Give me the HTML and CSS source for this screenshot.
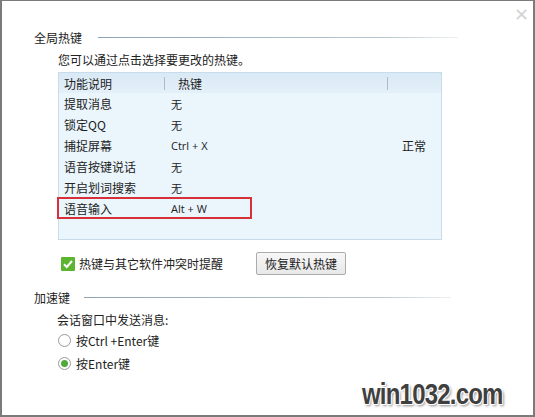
FILE: index.html
```html
<!DOCTYPE html>
<html lang="zh-CN">
<head>
    <meta charset="UTF-8">
    <title>热键设置</title>
    <link rel="stylesheet" href="styles.css">
</head>
<body>
    <div class="window">
        <div class="close">&#x2715;</div>

        <div class="group-title">
            <span>全局热键</span>
            <div class="rule"></div>
        </div>
        <div class="group-body">
            <p class="hint">您可以通过点击选择要更改的热键。</p>
            <div class="table">
                <div class="thead">
                    <div class="c1">功能说明</div>
                    <div class="c2">热键</div>
                    <div class="c3"></div>
                </div>
                <div class="row"><div class="c1">提取消息</div><div class="c2">无</div><div class="c3"></div></div>
                <div class="row"><div class="c1">锁定QQ</div><div class="c2">无</div><div class="c3"></div></div>
                <div class="row"><div class="c1">捕捉屏幕</div><div class="c2">Ctrl + X</div><div class="c3">正常</div></div>
                <div class="row"><div class="c1">语音按键说话</div><div class="c2">无</div><div class="c3"></div></div>
                <div class="row"><div class="c1">开启划词搜索</div><div class="c2">无</div><div class="c3"></div></div>
                <div class="row marked"><div class="c1">语音输入</div><div class="c2">Alt + W</div><div class="c3"></div></div>
            </div>
            <div class="actions">
                <label class="check">
                    <span class="box">
                        <svg width="14" height="14" viewBox="0 0 14 14"><rect width="14" height="14" rx="1" fill="#5cb531"/><path d="M3 7.2 L5.8 10 L11 4" fill="none" stroke="#fff" stroke-width="2"/></svg>
                    </span>
                    热键与其它软件冲突时提醒
                </label>
                <button class="btn">恢复默认热键</button>
            </div>
        </div>

        <div class="group-title second">
            <span>加速键</span>
            <div class="rule"></div>
        </div>
        <div class="group-body">
            <p class="hint">会话窗口中发送消息:</p>
            <div class="radio"><span class="dot"></span>按Ctrl +Enter键</div>
            <div class="radio on"><span class="dot"></span>按Enter键</div>
        </div>

        <div class="watermark">win1032.com</div>
    </div>
</body>
</html>
```

FILE: styles.css
```css
body {
    margin: 0;
    font-family: "Noto Sans CJK SC", "Liberation Sans", sans-serif;
    font-size: 12px;
    color: #222;
    background: #fff;
}
.window {
    position: relative;
    width: 531px;
    height: 414px;
    border: 2px solid #7b7b7b;
    border-top-width: 1px;
    background: #fff;
    overflow: hidden;
}
.close {
    position: absolute;
    top: -1px;
    right: 4px;
    font-size: 18px;
    color: #d4d4d4;
}
.group-title {
    display: flex;
    align-items: center;
    margin: 28px 0 0 32px;
    height: 16px;
}
.group-title.second {
    margin-top: 14px;
}
.rule {
    flex: 0 0 360px;
    height: 1px;
    margin-left: 16px;
    background: linear-gradient(to right, #8fa4b3, #b9c7d0 80%, #eef1f3);
}
.second .rule {
    flex-basis: 367px;
    margin-left: 14px;
}
.group-body {
    padding-left: 56px;
}
.hint {
    margin: 7px 0 0;
    line-height: 16px;
}
.second + .group-body .hint {
    margin: 7px 0 0 -1px;
}
.table {
    width: 382px;
    height: 166px;
    margin-top: 4px;
    border: 1px solid #c6dcea;
    background: #eaf5fc;
}
.thead, .row {
    display: flex;
    align-items: center;
}
.thead {
    height: 20px;
    background: linear-gradient(#d9e9f5, #e4f0f9);
}
.c1, .c2, .c3 {
    box-sizing: border-box;
}
.c1 {
    width: 105px;
    padding-left: 5px;
}
.c2 {
    width: 223px;
    padding-left: 7px;
}
.c3 {
    padding-left: 15px;
}
.thead .c2 {
    border-left: 1px solid #a9bccb;
    padding-left: 13px;
    height: 13px;
    line-height: 13px;
}
.thead .c3 {
    border-left: 1px solid #a9bccb;
    height: 13px;
}
.row {
    height: 21px;
}
.row .c2 {
    font-family: "Open Sans", "Noto Sans CJK SC", sans-serif;
    font-size: 11px;
}
.marked {
    position: relative;
}
.marked::after {
    content: "";
    position: absolute;
    left: -2px;
    top: -1px;
    width: 191px;
    height: 18px;
    border: 2px solid #d7303a;
}
.actions {
    display: flex;
    align-items: center;
    margin-top: 12px;
}
.check {
    display: flex;
    align-items: center;
    gap: 4px;
    width: 195px;
    padding-left: 3px;
}
.box {
    display: flex;
}
.btn {
    width: 90px;
    height: 23px;
    padding: 0;
    font-family: inherit;
    font-size: 12px;
    color: #222;
    border: 1px solid #acacac;
    border-radius: 2px;
    background: linear-gradient(#f7f7f7, #e8e8e8);
}
.radio {
    display: flex;
    align-items: center;
    gap: 5px;
    height: 22px;
    margin-top: 1px;
}
.dot {
    box-sizing: border-box;
    width: 13px;
    height: 13px;
    border: 1px solid #9a9a9a;
    border-radius: 50%;
    background: #fff;
    position: relative;
}
.on .dot::after {
    content: "";
    position: absolute;
    left: 2px;
    top: 2px;
    width: 7px;
    height: 7px;
    border-radius: 50%;
    background: #52a83a;
}
.watermark {
    position: absolute;
    left: 360px;
    bottom: 4px;
    font-family: "Liberation Sans", sans-serif;
    font-weight: bold;
    font-size: 30px;
    letter-spacing: -1px;
    color: #3f3f3f;
    transform: scaleX(0.8);
    transform-origin: left bottom;
    text-shadow: 0 0 2px #fff, 1px 1px 0 #fff, -1px -1px 0 #fff, 1px -1px 0 #fff, -1px 1px 0 #fff, 2px 2px 3px #888;
}
```
